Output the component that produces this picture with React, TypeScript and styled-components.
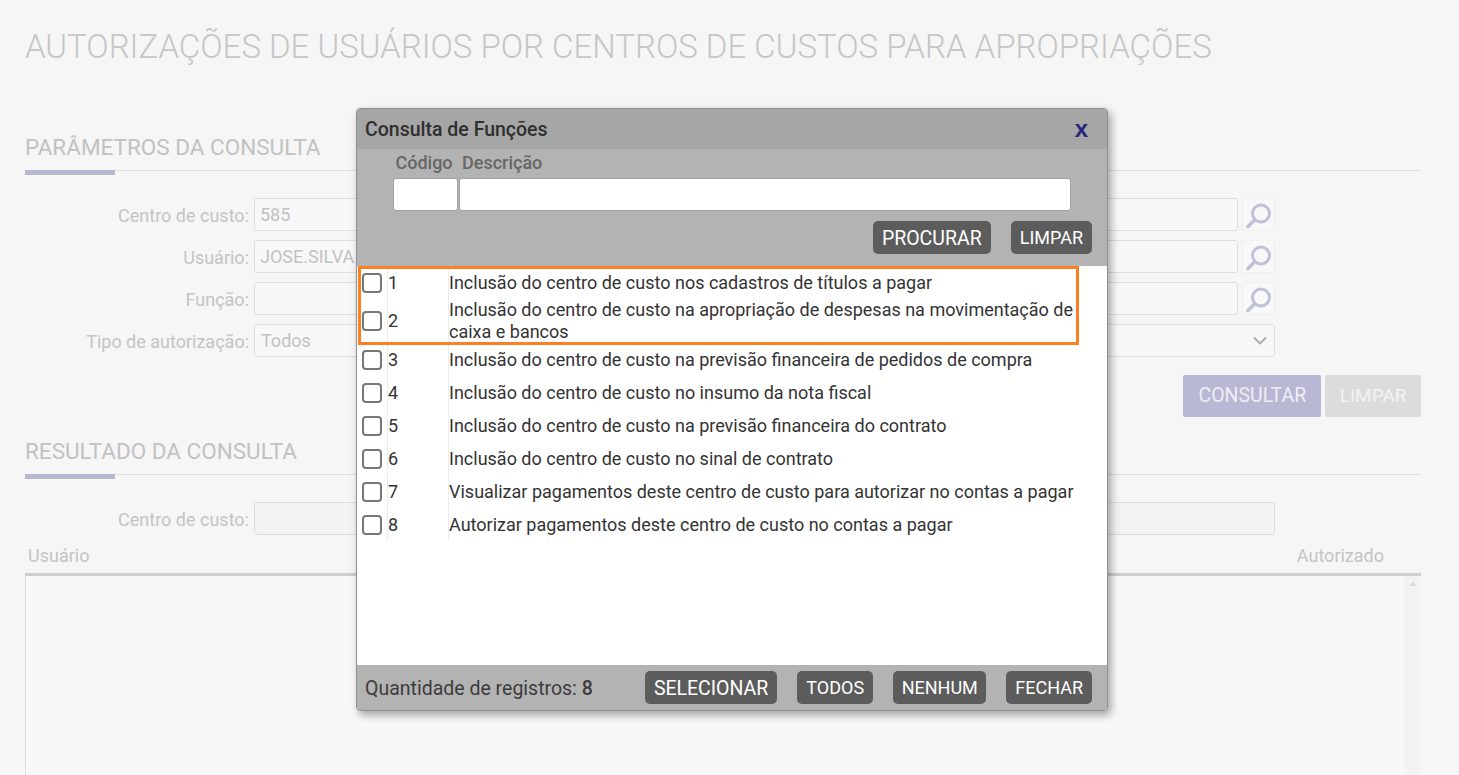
import styled, { createGlobalStyle } from 'styled-components';

const GlobalStyle = createGlobalStyle`
  html, body {
    margin: 0;
    height: 775px;
    overflow: hidden;
    background: #f6f6f6;
    font-family: Roboto, "Liberation Sans", sans-serif;
  }
  * {
    box-sizing: border-box;
  }
`;

const Page = styled.div`
  position: relative;
  height: 775px;
  overflow: hidden;
  padding: 0 38px 0 25px;
`;

const PageTitle = styled.h1`
  margin: 0;
  padding-top: 27px;
  height: 131px;
  font-size: 33px;
  line-height: 40px;
  font-weight: 300;
  color: #c6c6c6;
`;

const SectionHeader = styled.div`
  position: relative;
  height: 40px;
  border-bottom: 1px solid #e0e0e0;
  font-size: 22.5px;
  line-height: 32px;
  color: #c2c2c2;

  &::after {
    content: '';
    position: absolute;
    left: 0;
    bottom: -5px;
    width: 90px;
    height: 5px;
    background: #b9b8d3;
  }
`;

const Form = styled.div`
  display: flex;
  flex-direction: column;
  gap: 9px;
  padding-top: 27px;
`;

const FormRow = styled.div`
  display: flex;
  align-items: center;
  height: 33px;
  padding-right: 146px;
`;

const FieldLabel = styled.label`
  flex: 0 0 229px;
  padding: 2px 5px 0 0;
  text-align: right;
  font-size: 18px;
  color: #c4c4c4;
`;

const TextField = styled.div<{ $filled?: boolean }>`
  flex: 1;
  height: 33px;
  padding: 0 5px;
  border: 1px solid #dedede;
  border-radius: 3px;
  background: ${(p) => (p.$filled ? '#f3f3f3' : '#f8f8f8')};
  font-size: 18px;
  line-height: 32px;
  color: #c2c2c2;
`;

const LookupButton = styled.div`
  flex: 0 0 33px;
  height: 33px;
  margin-left: 4px;
  display: flex;
  align-items: center;
  justify-content: center;
  border: 1px solid #f0f0f0;
  background: #f8f8f8;
`;

const SelectField = styled(TextField)`
  display: flex;
  align-items: center;
  justify-content: space-between;
  padding: 0 7px 0 6px;
`;

const FormActions = styled.div`
  display: flex;
  justify-content: flex-end;
  gap: 4px;
  margin-top: 18px;
`;

const ActionButton = styled.div<{ $tone: 'primary' | 'muted' }>`
  height: 42px;
  padding: 0 ${(p) => (p.$tone === 'primary' ? '15px' : '14.5px')};
  border-radius: 2px;
  background: ${(p) => (p.$tone === 'primary' ? '#b8b8d4' : '#dcdcdc')};
  color: ${(p) => (p.$tone === 'primary' ? '#eeeef4' : '#f3f3f3')};
  font-size: ${(p) => (p.$tone === 'primary' ? '19.5px' : '19px')};
  line-height: 42px;
`;

const ResultSection = styled.div`
  margin-top: 18px;
`;

const TableHead = styled.div`
  display: flex;
  justify-content: space-between;
  margin-top: 9px;
  height: 32px;
  padding: 0 37px 0 3px;
  border-bottom: 3px solid #cdcdcd;
  font-size: 18px;
  line-height: 24px;
  color: #c4c4c4;
`;

const TableBox = styled.div`
  display: flex;
  justify-content: flex-end;
  height: 220px;
  border-left: 1px solid #e0e0e0;
  background: #f8f8f8;
`;

const ScrollTrack = styled.div`
  width: 17px;
  background: #f3f3f3;
  display: flex;
  justify-content: center;
  padding-top: 6px;
`;

const ScrollArrow = styled.div`
  width: 0;
  height: 0;
  border-left: 4px solid transparent;
  border-right: 4px solid transparent;
  border-bottom: 4px solid #dadada;
`;

const Modal = styled.div`
  position: absolute;
  left: 356px;
  top: 108px;
  width: 752px;
  height: 603px;
  display: flex;
  flex-direction: column;
  border: 1px solid #8f8f8f;
  border-radius: 4px;
  background: #fff;
  box-shadow: 3px 4px 8px rgba(0, 0, 0, 0.35);
  overflow: hidden;
`;

const ModalHeader = styled.div`
  flex: 0 0 40px;
  display: flex;
  align-items: center;
  justify-content: space-between;
  padding: 0 19px 0 8px;
  background: #a6a6a6;
  font-size: 19.5px;
  font-weight: 500;
  color: #2f2f2f;
`;

const CloseMark = styled.span`
  font-family: "Liberation Sans", Arial, sans-serif;
  font-size: 24px;
  font-weight: 700;
  color: #25287e;
`;

const FilterPanel = styled.div`
  flex: 0 0 117px;
  padding: 3px 15px 0 36px;
  background: #b3b3b3;
`;

const FilterGrid = styled.div`
  display: grid;
  grid-template-columns: 65px 612px;
  column-gap: 1px;
  row-gap: 5px;
`;

const FilterLabel = styled.span<{ $align: 'center' | 'left' }>`
  font-size: 18px;
  font-weight: 500;
  line-height: 21px;
  color: #666;
  white-space: nowrap;
  text-align: ${(p) => p.$align};
  padding-left: ${(p) => (p.$align === 'left' ? '3px' : '0')};
  padding-right: ${(p) => (p.$align === 'center' ? '3px' : '0')};
`;

const FilterInput = styled.input`
  height: 33px;
  width: 100%;
  border: 1px solid #a3a3a3;
  border-radius: 3px;
  background: #fff;
  outline: none;
`;

const ModalButtons = styled.div`
  display: flex;
  justify-content: flex-end;
  gap: 20px;
`;

const FilterButtons = styled(ModalButtons)`
  margin-top: 10px;
`;

const ModalButton = styled.div<{ $large?: boolean }>`
  height: 33px;
  padding: 0 9px;
  border-radius: 5px;
  background: #5c5c5c;
  color: #fff;
  font-size: ${(p) => (p.$large ? '19.5px' : '18px')};
  line-height: ${(p) => (p.$large ? '36px' : '34px')};
`;

const TightModalButton = styled(ModalButton)`
  padding: 0 8.5px;
`;

const ListBody = styled.div`
  position: relative;
  flex: 1;
  background: #fff;
`;

const ListRow = styled.div`
  display: grid;
  grid-template-columns: 31px 61px 1fr;
  min-height: 33px;
  color: #333;
  font-size: 18px;
  line-height: 22px;
`;

const ListCell = styled.div`
  display: flex;
  align-items: center;
  border-right: 1px solid #ececec;

  &:last-child {
    border-right: none;
    padding-right: 26px;
  }
`;

const CheckCell = styled(ListCell)`
  padding-left: 5px;
`;

const Check = styled.input.attrs({ type: 'checkbox' })`
  appearance: none;
  width: 20px;
  height: 20px;
  margin: 0;
  border: 2px solid #777;
  border-radius: 4px;
  background: #fff;
`;

const Highlight = styled.div`
  position: absolute;
  left: 1px;
  top: 0;
  width: 721px;
  height: 79px;
  border: 3px solid #fd7f23;
  pointer-events: none;
`;

const ModalFooter = styled.div`
  flex: 0 0 45px;
  display: flex;
  align-items: flex-start;
  justify-content: space-between;
  padding: 6px 15px 0 8px;
  background: #b3b3b3;
`;

const RecordCount = styled.div`
  font-size: 19.5px;
  line-height: 36px;
  color: #3c3c3c;

  strong {
    font-weight: 500;
  }
`;

const functions = [
  'Inclusão do centro de custo nos cadastros de títulos a pagar',
  'Inclusão do centro de custo na apropriação de despesas na movimentação de caixa e bancos',
  'Inclusão do centro de custo na previsão financeira de pedidos de compra',
  'Inclusão do centro de custo no insumo da nota fiscal',
  'Inclusão do centro de custo na previsão financeira do contrato',
  'Inclusão do centro de custo no sinal de contrato',
  'Visualizar pagamentos deste centro de custo para autorizar no contas a pagar',
  'Autorizar pagamentos deste centro de custo no contas a pagar',
];

function SearchIcon() {
  return (
    <svg width="28" height="28" viewBox="0 0 28 28" fill="none">
      <circle cx="16" cy="12.5" r="8.5" stroke="#c0c0da" strokeWidth="3" />
      <path d="M9.5 19 L3 25.5" stroke="#c0c0da" strokeWidth="3.6" strokeLinecap="round" />
    </svg>
  );
}

function Chevron() {
  return (
    <svg width="14" height="9" viewBox="0 0 14 9" fill="none">
      <path d="M1 1.5 L7 7.5 L13 1.5" stroke="#aaa" strokeWidth="1.8" />
    </svg>
  );
}

export default function App() {
  return (
    <>
      <GlobalStyle />
      <Page>
        <PageTitle>AUTORIZAÇÕES DE USUÁRIOS POR CENTROS DE CUSTOS PARA APROPRIAÇÕES</PageTitle>
        <SectionHeader>PARÂMETROS DA CONSULTA</SectionHeader>
        <Form>
          <FormRow>
            <FieldLabel>Centro de custo:</FieldLabel>
            <TextField>585</TextField>
            <LookupButton><SearchIcon /></LookupButton>
          </FormRow>
          <FormRow>
            <FieldLabel>Usuário:</FieldLabel>
            <TextField>JOSE.SILVA</TextField>
            <LookupButton><SearchIcon /></LookupButton>
          </FormRow>
          <FormRow>
            <FieldLabel>Função:</FieldLabel>
            <TextField />
            <LookupButton><SearchIcon /></LookupButton>
          </FormRow>
          <FormRow>
            <FieldLabel>Tipo de autorização:</FieldLabel>
            <SelectField>Todos<Chevron /></SelectField>
          </FormRow>
        </Form>
        <FormActions>
          <ActionButton $tone="primary">CONSULTAR</ActionButton>
          <ActionButton $tone="muted">LIMPAR</ActionButton>
        </FormActions>
        <ResultSection>
          <SectionHeader>RESULTADO DA CONSULTA</SectionHeader>
          <Form>
            <FormRow>
              <FieldLabel>Centro de custo:</FieldLabel>
              <TextField $filled />
            </FormRow>
          </Form>
          <TableHead>
            <span>Usuário</span>
            <span>Autorizado</span>
          </TableHead>
          <TableBox>
            <ScrollTrack><ScrollArrow /></ScrollTrack>
          </TableBox>
        </ResultSection>

        <Modal>
          <ModalHeader>
            Consulta de Funções
            <CloseMark>x</CloseMark>
          </ModalHeader>
          <FilterPanel>
            <FilterGrid>
              <FilterLabel $align="center">Código</FilterLabel>
              <FilterLabel $align="left">Descrição</FilterLabel>
              <FilterInput />
              <FilterInput />
            </FilterGrid>
            <FilterButtons>
              <ModalButton $large>PROCURAR</ModalButton>
              <ModalButton>LIMPAR</ModalButton>
            </FilterButtons>
          </FilterPanel>
          <ListBody>
            {functions.map((text, i) => (
              <ListRow key={text}>
                <CheckCell><Check /></CheckCell>
                <ListCell>{i + 1}</ListCell>
                <ListCell>{text}</ListCell>
              </ListRow>
            ))}
            <Highlight />
          </ListBody>
          <ModalFooter>
            <RecordCount>Quantidade de registros: <strong>8</strong></RecordCount>
            <ModalButtons>
              <ModalButton $large>SELECIONAR</ModalButton>
              <ModalButton>TODOS</ModalButton>
              <TightModalButton>NENHUM</TightModalButton>
              <ModalButton>FECHAR</ModalButton>
            </ModalButtons>
          </ModalFooter>
        </Modal>
      </Page>
    </>
  );
}
